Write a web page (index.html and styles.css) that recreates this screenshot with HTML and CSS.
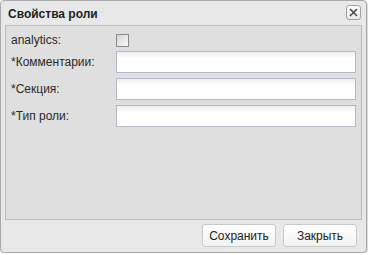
FILE: index.html
```html
<!DOCTYPE html>
<html lang="ru">
<head>
    <meta charset="UTF-8">
    <title>Свойства роли</title>
    <link rel="stylesheet" href="styles.css">
</head>
<body>
    <div class="window">
        <div class="header">
            <span class="title">Свойства роли</span>
            <span class="close-btn">
                <svg width="11" height="11" viewBox="0 0 11 11">
                    <path d="M2 2 L9 9 M9 2 L2 9" stroke="#4a4a4a" stroke-width="1.6" fill="none"/>
                </svg>
            </span>
        </div>
        <div class="panel">
            <div class="row row-check">
                <label class="label">analytics:</label>
                <span class="checkbox"></span>
            </div>
            <div class="row">
                <label class="label">*Комментарии:</label>
                <span class="field"></span>
            </div>
            <div class="row">
                <label class="label">*Секция:</label>
                <span class="field"></span>
            </div>
            <div class="row">
                <label class="label">*Тип роли:</label>
                <span class="field"></span>
            </div>
        </div>
        <div class="footer">
            <button class="btn">Сохранить</button>
            <button class="btn">Закрыть</button>
        </div>
    </div>
</body>
</html>
```

FILE: styles.css
```css
body {
    margin: 0;
    padding: 0;
    font-family: "Liberation Sans", Arial, sans-serif;
    font-size: 12px;
    color: #222;
    background: #ffffff;
}

.window {
    width: 365px;
    height: 251px;
    border: 1px solid #a9a9a9;
    border-radius: 4px;
    background-color: #e8e8e8;
    display: flex;
    flex-direction: column;
    box-shadow: 1px 1px 1px rgba(0,0,0,0.15);
}

.header {
    height: 24px;
    display: flex;
    align-items: center;
    justify-content: space-between;
    padding: 0 5px 0 7px;
}

.title {
    font-weight: bold;
    color: #1f1f1f;
    margin-top: 1px;
}

.close-btn {
    width: 13px;
    height: 13px;
    border: 1px solid #a0a0a0;
    border-radius: 3px;
    background: linear-gradient(#ffffff, #ececec);
    display: flex;
    align-items: center;
    justify-content: center;
    margin-top: -2px;
}

.panel {
    margin: 0 4px;
    border: 1px solid #c4baba;
    background-color: #dfdfdf;
    padding: 7px 5px 0 5px;
    box-sizing: border-box;
    height: 195px;
}

.row {
    display: flex;
    align-items: center;
    height: 22px;
    margin-bottom: 5px;
}

.row-check {
    height: 14px;
    margin-bottom: 4px;
}

.label {
    width: 105px;
    color: #2a2a2a;
}

.checkbox {
    width: 11px;
    height: 11px;
    border: 1px solid #8a8a8a;
    background: linear-gradient(135deg, #d4d4d4, #fafafa);
}

.field {
    flex: 1;
    height: 20px;
    border: 1px solid #b5b8c8;
    background: linear-gradient(#eeeeee, #ffffff 6px);
}

.footer {
    display: flex;
    justify-content: flex-end;
    gap: 7px;
    padding: 4px 9px 0 0;
}

.btn {
    width: 74px;
    height: 23px;
    border: 1px solid #c8c8c8;
    border-radius: 3px;
    background: linear-gradient(#ffffff, #f2f2f2);
    font-family: "Liberation Sans", Arial, sans-serif;
    font-size: 12px;
    color: #222;
    padding: 0;
}
```
